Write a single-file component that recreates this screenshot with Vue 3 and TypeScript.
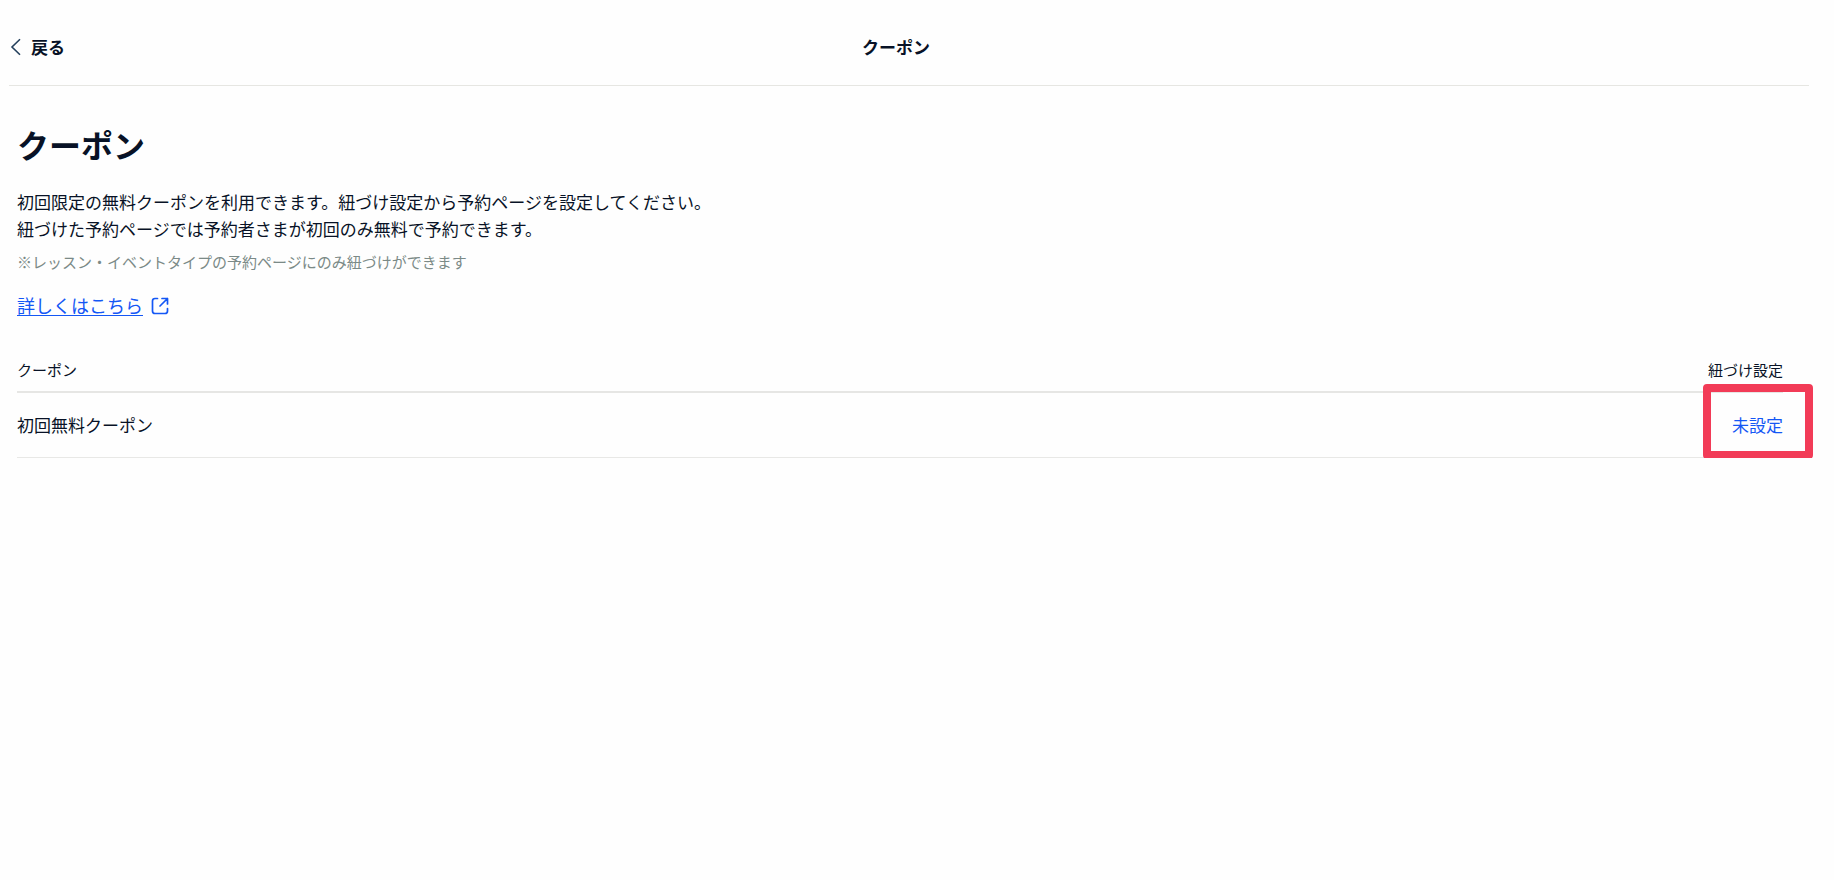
<script setup lang="ts">
interface Coupon {
  id: number
  name: string
  status: string
}

const coupons: Coupon[] = [{ id: 1, name: '初回無料クーポン', status: '未設定' }]
</script>

<template>
  <div class="page">
    <header class="bar">
      <button class="back" type="button">
        <svg class="chevron" viewBox="0 0 12 18" aria-hidden="true">
          <path d="M11 1.2 L3 9 L11 16.8" />
        </svg>
        <span>戻る</span>
      </button>
      <p class="bar-title">クーポン</p>
    </header>

    <main class="content">
      <h1>クーポン</h1>
      <p class="lead">
        初回限定の無料クーポンを利用できます。紐づけ設定から予約ページを設定してください。<br />
        紐づけた予約ページでは予約者さまが初回のみ無料で予約できます。
      </p>
      <p class="note">※レッスン・イベントタイプの予約ページにのみ紐づけができます</p>
      <a class="more" href="#">
        <span class="more-text">詳しくはこちら</span>
        <svg class="external" viewBox="0 0 18 18" aria-hidden="true">
          <path d="M6.5 1.5 H4 Q1.5 1.5 1.5 4 V14 Q1.5 16.5 4 16.5 H14 Q16.5 16.5 16.5 14 V11.5" />
          <path d="M11 1.5 H16.5 V7 M16.5 1.5 L9 9" />
        </svg>
      </a>

      <table>
        <thead>
          <tr>
            <th scope="col">クーポン</th>
            <th scope="col" class="action">紐づけ設定</th>
          </tr>
        </thead>
        <tbody>
          <tr v-for="coupon in coupons" :key="coupon.id">
            <td>{{ coupon.name }}</td>
            <td class="action">
              <button class="status" type="button">{{ coupon.status }}</button>
            </td>
          </tr>
        </tbody>
      </table>
    </main>
  </div>
</template>

<style>
body {
  margin: 0;
  background: #fefefe;
}
</style>

<style scoped>
.page {
  color: #081226;
  font-family: "Noto Sans CJK JP", sans-serif;
  font-size: 17px;
  line-height: 27px;
}

.bar {
  display: grid;
  grid-template-columns: 1fr auto 1fr;
  align-items: center;
  margin: 0 25px 0 9px;
  padding: 33px 26px 25px 0;
  border-bottom: 1px solid #e6e6e2;
}

button {
  padding: 0;
  border: 0;
  background: none;
  color: inherit;
  font: inherit;
  cursor: pointer;
}

.back {
  display: flex;
  align-items: center;
  justify-self: start;
  gap: 10px;
  font-weight: 700;
}

.chevron {
  width: 12px;
  height: 18px;
  fill: none;
  stroke: #24405c;
  stroke-width: 1.6;
}

.bar-title {
  margin: 0;
  font-weight: 700;
}

.content {
  padding: 34px 51px 0 17px;
}

h1 {
  margin: 0;
  font-size: 32px;
  line-height: 48px;
  font-weight: 700;
}

.lead {
  margin: 20px 0 0;
}

.note {
  margin: 8px 0 0;
  color: #7b8a87;
  font-size: 15px;
  line-height: 24px;
}

.more {
  display: flex;
  align-items: center;
  width: fit-content;
  gap: 8px;
  margin-top: 18px;
  color: #1457f5;
  font-size: 18px;
  text-decoration: none;
}

.more-text {
  text-decoration: underline;
  text-decoration-thickness: 1px;
  text-underline-offset: 2px;
}

.external {
  width: 18px;
  height: 18px;
  fill: none;
  stroke: currentColor;
  stroke-width: 1.7;
  stroke-linecap: round;
  stroke-linejoin: round;
}

table {
  width: 100%;
  margin-top: 39px;
  border-collapse: separate;
  border-spacing: 0;
}

th {
  padding: 0 0 9px;
  border-bottom: 2px solid #e6e6e4;
  font-size: 15px;
  line-height: 24px;
  font-weight: 400;
  text-align: left;
}

td {
  height: 62px;
  padding: 0 0 2px;
  border-bottom: 1px solid #e8e8e6;
}

.action {
  text-align: right;
}

td.action {
  position: relative;
}

.status {
  color: #1457f5;
}

.status::after {
  content: "";
  position: absolute;
  top: -9px;
  right: -30px;
  bottom: -2px;
  width: 94px;
  border: 8px solid #f23b57;
  border-radius: 4px;
}
</style>
